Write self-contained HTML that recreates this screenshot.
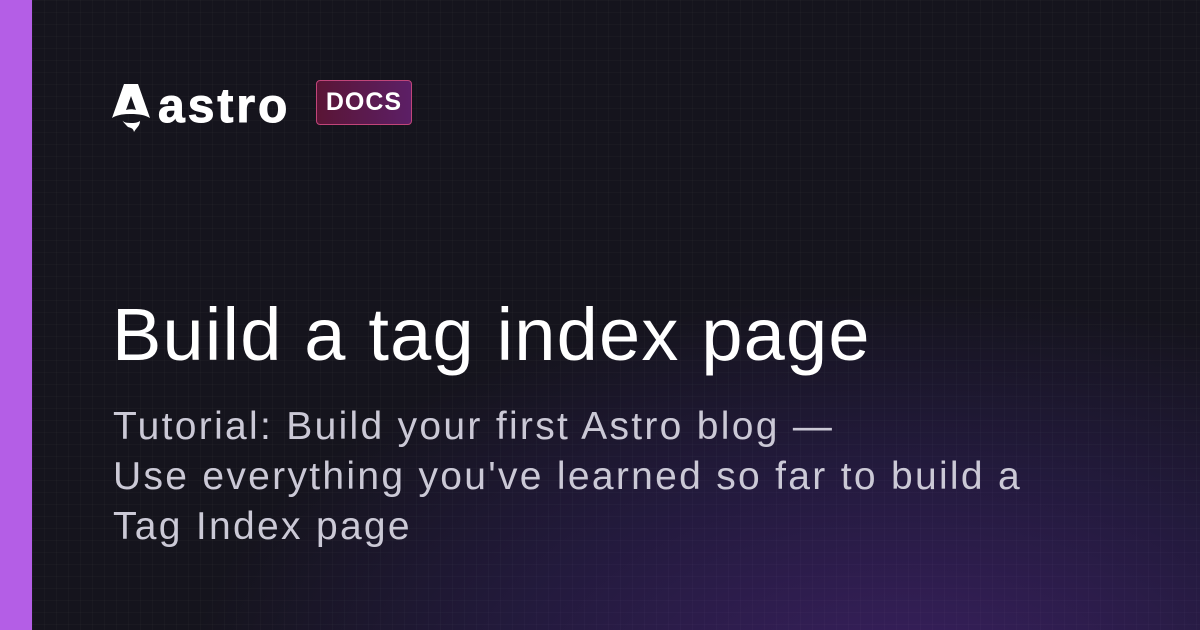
<!DOCTYPE html>
<html><head><style>
body{margin:0;width:1200px;height:630px;overflow:hidden;background:#16151f;font-family:"Liberation Sans",sans-serif;position:relative}
.bar{position:absolute;left:0;top:0;width:32px;height:630px;background:#b45ee6}
.bg{position:absolute;left:32px;top:0;right:0;bottom:0;background:radial-gradient(ellipse 900px 500px at 75% 110%,#3a2060 0%,#231a3d 45%,#15141d 80%),#15141d}
.grid{position:absolute;left:32px;top:0;right:0;bottom:0;background-image:linear-gradient(rgba(255,255,255,.02) 1px,transparent 1px),linear-gradient(90deg,rgba(255,255,255,.02) 1px,transparent 1px);background-size:12px 12px}
.logo{position:absolute;left:112px;top:82px;display:flex;align-items:center}
.word{color:#fff;font-weight:bold;font-size:48px;margin-left:8px;letter-spacing:3px;line-height:40px;-webkit-text-stroke:1px #fff}
.docs{position:absolute;left:316px;top:80px;width:96px;height:45px;border:1.5px solid #c0457a;border-radius:4px;background:linear-gradient(90deg,#5a1535,#5c1f66);color:#fff;font-weight:bold;font-size:25px;letter-spacing:1px;display:flex;align-items:center;justify-content:center;box-sizing:border-box}
h1{position:absolute;left:112px;top:290px;margin:0;color:#fff;font-weight:normal;font-size:74px;line-height:90px;letter-spacing:1.2px;white-space:nowrap}
p{position:absolute;left:113px;top:402px;margin:0;color:#cbc9d6;font-size:39px;line-height:50px;letter-spacing:2.3px;white-space:nowrap}
</style></head><body>
<div class="bar"></div><div class="bg"></div><div class="grid"></div>
<div class="logo">
<svg width="38" height="50" viewBox="0 0 38 50"><path d="M12 2h14l12 34c-5-3-11-4-19-4s-14 1-19 4z M19 14l-5 14c3-1 7-1 10 0z" fill="#fff" fill-rule="evenodd"/><path d="M10 38c2 3 6 3 9 3s6 0 9-2c0 5-4 7-6 11c-1-4-3-4-6-5c-2-2-4-4-6-7z" fill="#fff"/></svg>
<span class="word">astro</span></div>
<div class="docs">DOCS</div>
<h1>Build a tag index page</h1>
<p>Tutorial: Build your first Astro blog —<br>Use everything you've learned so far to build a<br>Tag Index page</p>
</body></html>
